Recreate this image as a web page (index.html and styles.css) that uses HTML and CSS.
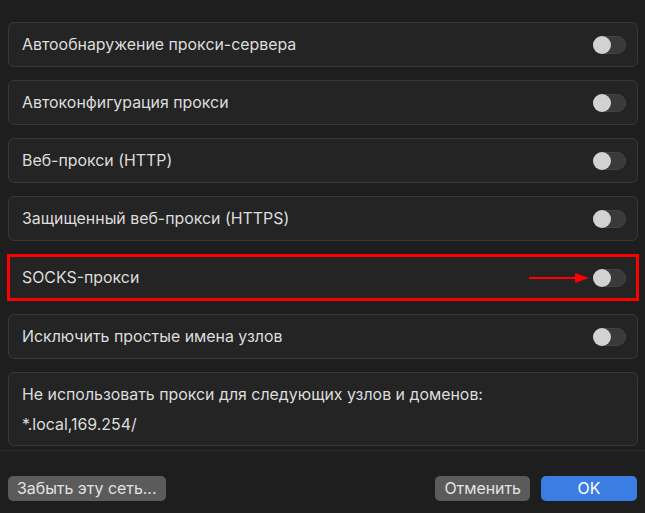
FILE: index.html
```html
<!DOCTYPE html>
<html lang="ru">
<head>
  <meta charset="UTF-8" />
  <title>Прокси</title>
  <link rel="stylesheet" href="styles.css">
</head>
<body>

  <div class="list">
    <div class="row"><span>Автообнаружение прокси-сервера</span><div class="toggle"></div></div>
    <div class="row"><span>Автоконфигурация прокси</span><div class="toggle"></div></div>
    <div class="row"><span>Веб-прокси (HTTP)</span><div class="toggle"></div></div>
    <div class="row"><span>Защищенный веб-прокси (HTTPS)</span><div class="toggle"></div></div>
    <div class="row marked">
      <span>SOCKS-прокси</span>
      <div class="arrow"></div>
      <div class="toggle"></div>
    </div>
    <div class="row"><span>Исключить простые имена узлов</span><div class="toggle"></div></div>
    <div class="row bypass">
      <div>Не использовать прокси для следующих узлов и доменов:</div>
      <div>*.local,169.254/</div>
    </div>
  </div>

  <div class="footer">
    <button class="btn">Забыть эту сеть...</button>
    <div class="spacer"></div>
    <button class="btn">Отменить</button>
    <button class="btn primary">OK</button>
  </div>

</body>
</html>
```

FILE: styles.css
```css
* {
  box-sizing: border-box;
}
html, body {
  margin: 0;
  height: 100%;
  background: #1e1e1e;
  font-family: Inter, "Noto Sans", sans-serif;
  color: #dddddd;
}

.list {
  display: flex;
  flex-direction: column;
  gap: 13px;
  padding: 22px 7px 4px 8px;
  border-bottom: 1px solid #2c2c2c;
}

.row {
  position: relative;
  height: 45px;
  display: flex;
  align-items: center;
  padding: 0 11px 0 13px;
  background: #242424;
  border: 1px solid #383838;
  border-radius: 6px;
  font-size: 15.9px;
}
.row span {
  flex: 1;
}

.toggle {
  position: relative;
  width: 33px;
  height: 18px;
  border-radius: 9px;
  background: #3a3a3a;
  border: 1px solid #444;
}
.toggle::after {
  content: "";
  position: absolute;
  top: -1px;
  left: -1px;
  width: 18px;
  height: 18px;
  border-radius: 50%;
  background: #d2d2d2;
}

/* выделенная строка с красной рамкой */
.row.marked {
  border: 3px solid #ff0000;
  border-radius: 0;
  margin: 0 -1px 0 -1px;
  height: 47px;
  padding: 0 10px 0 12px;
}
.arrow {
  width: 58px;
  height: 2px;
  background: #ff0000;
  margin-right: 6px;
  position: relative;
}
.arrow::after {
  content: "";
  position: absolute;
  right: -2px;
  top: -4px;
  border-left: 14px solid #ff0000;
  border-top: 5px solid transparent;
  border-bottom: 5px solid transparent;
}

.row.bypass {
  height: 74px;
  flex-direction: column;
  align-items: flex-start;
  justify-content: center;
  gap: 11px;
}

.footer {
  display: flex;
  gap: 11px;
  padding: 25px 8px 0 8px;
}
.spacer {
  flex: 1;
}
.btn {
  height: 25px;
  padding: 0 9px;
  border: none;
  border-radius: 5px;
  background: #5b5b5b;
  color: #e2e2e2;
  font-family: Inter, "Noto Sans", sans-serif;
  font-size: 15.9px;
}
.btn.primary {
  width: 96px;
  background: #3b7de3;
  color: #fff;
}
```
